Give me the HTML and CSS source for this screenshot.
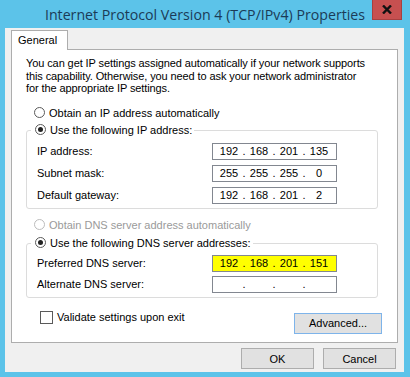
FILE: index.html
```html
<!DOCTYPE html>
<html>
<head>
<meta charset="utf-8">
<link rel="stylesheet" href="styles.css">
</head>
<body>
<div class="window">
  <div class="titlebar">
    <span class="title">Internet Protocol Version 4 (TCP/IPv4) Properties</span>
    <div class="close"><svg width="10" height="9" viewBox="0 0 10 9"><path d="M1 0.5 L9 8.5 M9 0.5 L1 8.5" stroke="#111" stroke-width="2.4"/></svg></div>
  </div>
  <div class="client">
    <div class="tabs"><div class="tab">General</div></div>
    <div class="panel">
      <p class="intro">You can get IP settings assigned automatically if your network supports this capability. Otherwise, you need to ask your network administrator for the appropriate IP settings.</p>
      <div class="option first"><span class="radio"></span><span>Obtain an IP address automatically</span></div>
      <div class="group ipgroup">
        <div class="legend"><span class="radio on"></span><span>Use the following IP address:</span></div>
        <div class="row"><span class="lbl">IP address:</span><div class="ipbox"><span class="oct">192</span><span class="dot">.</span><span class="oct">168</span><span class="dot">.</span><span class="oct">201</span><span class="dot">.</span><span class="oct">135</span></div></div>
        <div class="row"><span class="lbl">Subnet mask:</span><div class="ipbox"><span class="oct">255</span><span class="dot">.</span><span class="oct">255</span><span class="dot">.</span><span class="oct">255</span><span class="dot">.</span><span class="oct">0</span></div></div>
        <div class="row"><span class="lbl">Default gateway:</span><div class="ipbox"><span class="oct">192</span><span class="dot">.</span><span class="oct">168</span><span class="dot">.</span><span class="oct">201</span><span class="dot">.</span><span class="oct">2</span></div></div>
      </div>
      <div class="option disabled"><span class="radio"></span><span>Obtain DNS server address automatically</span></div>
      <div class="group dnsgroup">
        <div class="legend"><span class="radio on"></span><span>Use the following DNS server addresses:</span></div>
        <div class="row"><span class="lbl">Preferred DNS server:</span><div class="ipbox hl"><span class="oct">192</span><span class="dot">.</span><span class="oct">168</span><span class="dot">.</span><span class="oct">201</span><span class="dot">.</span><span class="oct">151</span></div></div>
        <div class="row"><span class="lbl">Alternate DNS server:</span><div class="ipbox"><span class="oct"></span><span class="dot">.</span><span class="oct"></span><span class="dot">.</span><span class="oct"></span><span class="dot">.</span><span class="oct"></span></div></div>
      </div>
      <div class="bottomrow">
        <div class="check"><span class="box"></span><span>Validate settings upon exit</span></div>
        <div class="btn advanced">Advanced...</div>
      </div>
    </div>
    <div class="buttons">
      <div class="btn">OK</div>
      <div class="btn">Cancel</div>
    </div>
  </div>
</div>
</body>
</html>
```
FILE: styles.css
```css
html, body { margin: 0; padding: 0; }
body { background: #5cc3e9; font-family: "Liberation Sans", Arial, sans-serif; font-size: 11px; color: #000; }
.window { width: 410px; height: 377px; }
.titlebar { height: 28px; position: relative; display: flex; justify-content: center; align-items: center; }
.title { font-family: "Open Sans", "Noto Sans", sans-serif; font-size: 14.2px; color: #1b3b57; margin-top: 1px; }
.close { position: absolute; right: 8px; top: 0; width: 30px; height: 20px; background: #c75050; display: flex; align-items: center; justify-content: center; box-sizing: border-box; border: 1px solid #a84040; border-top: none; }
.client { margin: 0 6px 0 5px; height: 344px; background: #f0f0f0; display: flex; flex-direction: column; }
.tabs { padding: 2px 0 0 6px; display: flex; height: 19px; }
.tab { width: 49px; height: 19px; background: #fff; border: 1px solid #adadad; border-bottom: none; padding-left: 6px; line-height: 18px; position: relative; z-index: 1; }
.panel { margin: 0 6px 0 6px; height: 294px; background: #fff; border: 1px solid #adadad; position: relative; padding: 0 0 0 14px; box-sizing: border-box; }
.intro { margin: 7px 0 0 0; line-height: 12.5px; width: 345px; letter-spacing: -0.1px; }
.option { display: flex; align-items: center; height: 14px; margin-left: 8px; }
.option.first { margin-top: 11px; }
.radio { width: 11px; height: 11px; border: 1px solid #5a5a5a; border-radius: 50%; box-sizing: border-box; margin-right: 4px; display: inline-flex; align-items: center; justify-content: center; background: #fff; }
.radio.on::after { content: ""; width: 5px; height: 5px; border-radius: 50%; background: #222; }
.disabled { color: #9a9a9a; }
.disabled .radio { border-color: #bcbcbc; }
.group { border: 1px solid #dcdcdc; border-radius: 3px; width: 352px; box-sizing: border-box; padding: 0 0 4px 10px; }
.ipgroup { margin-top: 10px; }
.legend { display: flex; align-items: center; height: 14px; margin: -8px 0 0 -6px; width: fit-content; background: #fff; padding: 0 2px 0 4px; }
.row { display: flex; align-items: center; justify-content: space-between; padding-right: 40px; height: 17px; margin-top: 5px; }
.ipgroup .legend + .row { margin-top: 6px; }
.dnsgroup .row { margin-top: 4px; }
.dnsgroup .legend + .row { margin-top: 5px; }
.ipbox { width: 125px; height: 17px; border: 1px solid #828790; box-sizing: border-box; display: flex; padding-left: 3px; align-items: center; background: #fff; }
.ipbox.hl { background: #ffff00; }
.oct { width: 26px; text-align: center; }
.dot { width: 4px; text-align: center; }
.option.disabled { margin-top: 9px; }
.dnsgroup { margin-top: 11px; }
.bottomrow { display: flex; justify-content: space-between; align-items: flex-start; width: 356px; margin-top: 15px; }
.check { display: flex; align-items: center; margin-left: 14px; margin-top: -2px; }
.box { width: 13px; height: 13px; border: 1px solid #5a5a5a; box-sizing: border-box; margin-right: 4px; background: #fff; }
.btn { width: 73px; height: 21px; box-sizing: border-box; border: 1px solid #adadad; background: #e1e1e1; display: flex; align-items: center; justify-content: center; }
.btn.advanced { width: 88px; border-color: #7eb4ea; }
.buttons { display: flex; justify-content: flex-end; gap: 9px; padding: 5px 8px 0 0; }
```
